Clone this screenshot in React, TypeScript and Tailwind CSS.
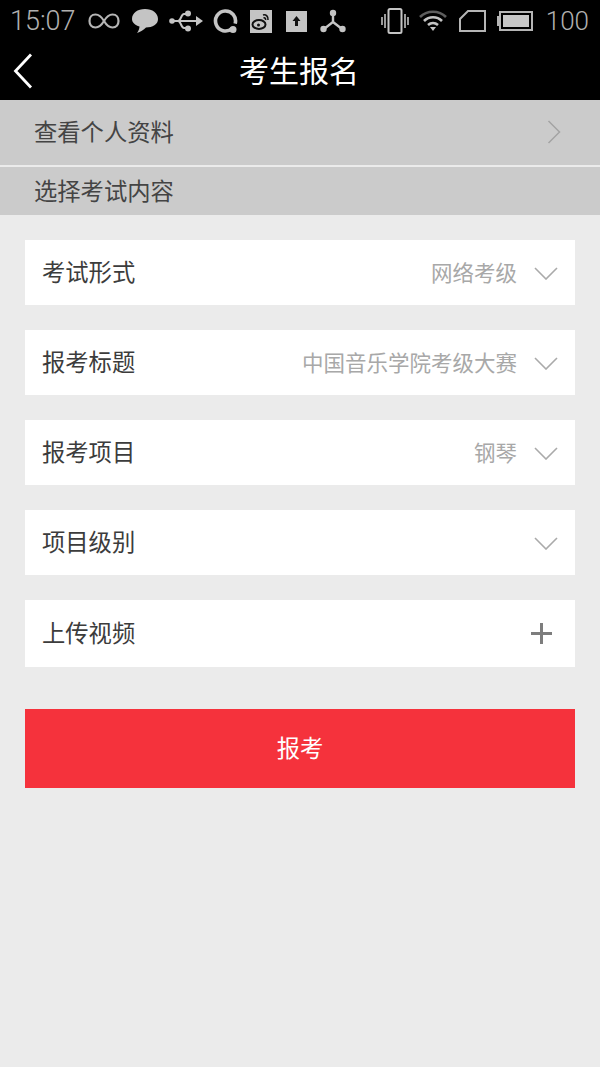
import React from 'react';

const cjk = { fontFamily: '"Noto Sans CJK SC", "Liberation Sans", sans-serif' };

const rows = [
  { label: '考试形式', value: '网络考级' },
  { label: '报考标题', value: '中国音乐学院考级大赛' },
  { label: '报考项目', value: '钢琴' },
  { label: '项目级别', value: '' },
];

const ChevronDown = () => (
  <svg width="24" height="14" viewBox="0 0 24 14" fill="none" className="ml-[17px]">
    <path d="M1 2 L12 13 L23 2" stroke="#aaaaaa" strokeWidth="1.6" />
  </svg>
);

const StatusIcons = () => (
  <div className="flex items-center">
    {/* infinity */}
    <svg width="32" height="18" viewBox="0 0 32 18" fill="none" className="ml-[12px]">
      <path d="M16 9 C13 4 10 2.500 7.500 2.500 C3.500 2.500 1.500 5.500 1.500 9 C1.500 12.500 3.500 15.500 7.500 15.500 C10 15.500 13 14 16 9 C19 4 22 2.500 24.500 2.500 C28.500 2.500 30.500 5.500 30.500 9 C30.500 12.500 28.500 15.500 24.500 15.500 C22 15.500 19 14 16 9 Z" stroke="#b5b5b5" strokeWidth="2.200" />
    </svg>
    {/* message */}
    <svg width="26" height="24" viewBox="0 0 26 24" className="ml-[12px]">
      <path d="M13 0 C20.500 0 26 4 26 10 C26 15.500 20.500 18.500 14 18.500 C11.500 21 8.500 23 5 24 C6.500 22 7.500 19.500 7.500 17.500 C3 16 0 13.500 0 10 C0 4 5.500 0 13 0 Z" fill="#c4c4c4" />
    </svg>
    {/* usb */}
    <svg width="34" height="22" viewBox="0 0 34 22" fill="none" className="ml-[11px]">
      <path d="M3 11 H28 M9 11 C12 11 12 4 15 4 H18 M9 11 C12 11 12 18 15 18 H18" stroke="#c4c4c4" strokeWidth="2" />
      <circle cx="3" cy="11" r="2.800" fill="#c4c4c4" />
      <circle cx="19" cy="3.500" r="3" fill="#c4c4c4" />
      <circle cx="19" cy="18.500" r="3" fill="#c4c4c4" />
      <path d="M27 6 L34 11 L27 16 Z" fill="#c4c4c4" />
    </svg>
    {/* q */}
    <svg width="26" height="26" viewBox="0 -1 26 26" fill="none" className="ml-[10px]">
      <path d="M18.900 19.660 A10 10 0 1 1 22.160 14.600" stroke="#c4c4c4" strokeWidth="3.600" />
      <circle cx="20" cy="20.500" r="3.500" fill="#c4c4c4" />
    </svg>
    {/* weibo */}
    <svg width="22" height="23" viewBox="0 0 22 23" fill="none" className="ml-[11px]">
      <rect width="22" height="23" fill="#c4c4c4" />
      <ellipse cx="9" cy="14.500" rx="6.500" ry="4.500" stroke="#111111" strokeWidth="2" />
      <circle cx="8.500" cy="15" r="1.500" fill="#111111" />
      <path d="M13 5 C16 4 18.500 6.500 18 10 M13.500 8 C15 7.500 16 8.500 15.500 10" stroke="#111111" strokeWidth="1.600" />
    </svg>
    {/* upload */}
    <svg width="21" height="21" viewBox="0 0 21 21" className="ml-[14px]">
      <rect width="21" height="21" fill="#c4c4c4" />
      <path d="M10.500 5 L14.500 10 H12 V15 H9 V10 H6.500 Z" fill="#111111" />
    </svg>
    {/* nodes */}
    <svg width="26" height="24" viewBox="0 0 26 24" fill="none" className="ml-[13px]">
      <path d="M13 4 V13 L4 20 M13 13 L22 20" stroke="#c4c4c4" strokeWidth="2.400" />
      <circle cx="13" cy="4" r="3.200" fill="#c4c4c4" />
      <circle cx="3.500" cy="20" r="3.200" fill="#c4c4c4" />
      <circle cx="22.500" cy="20" r="3.200" fill="#c4c4c4" />
    </svg>
  </div>
);

const StatusRight = () => (
  <div className="flex items-center">
    {/* vibrate */}
    <svg width="28" height="26" viewBox="0 0 28 26" fill="none">
      <rect x="7.500" y="1" width="13" height="24" rx="1.500" stroke="#c4c4c4" strokeWidth="2" />
      <path d="M4 6 V20 M1 9 V17 M24 6 V20 M27 9 V17" stroke="#9a9a9a" strokeWidth="2" />
    </svg>
    {/* wifi */}
    <svg width="28" height="22" viewBox="0 0 28 22" fill="none" className="ml-[10px]">
      <path d="M1 7 C8 0 20 0 27 7" stroke="#5e5e5e" strokeWidth="2.600" />
      <path d="M5 11 C10 6 18 6 23 11" stroke="#c4c4c4" strokeWidth="2.600" />
      <path d="M9 15 C12 12.500 16 12.500 19 15" stroke="#c4c4c4" strokeWidth="2.600" />
      <path d="M11 17 H17 L14 21 Z" fill="#c4c4c4" />
    </svg>
    {/* sim */}
    <svg width="27" height="22" viewBox="0 0 27 22" fill="none" className="ml-[12px]">
      <path d="M9 1 H26 V21 H1 V9 Z" stroke="#b5b5b5" strokeWidth="2" />
    </svg>
    {/* battery */}
    <svg width="36" height="20" viewBox="0 0 36 20" fill="none" className="ml-[11px]">
      <rect y="5" width="3" height="10" fill="#b5b5b5" />
      <rect x="3" y="1" width="32" height="18" stroke="#b5b5b5" strokeWidth="2" />
      <rect x="6" y="4" width="26" height="12" fill="#c8c8c8" />
    </svg>
    <span className="ml-[13px] text-[26px] leading-none font-light text-[#b0b0b0]" style={{ fontFamily: 'Roboto, sans-serif' }}>100</span>
  </div>
);

export default function App() {
  return (
    <div className="w-[600px] h-[1067px] flex flex-col bg-[#ebebeb]" style={cjk}>
      <header className="h-[100px] bg-black flex flex-col shrink-0">
        <div className="h-[42px] pl-[10px] pr-[11px] flex items-center justify-between">
          <div className="flex items-center">
            <span className="text-[27px] leading-none font-light text-[#b0b0b0]" style={{ fontFamily: 'Roboto, sans-serif' }}>15:07</span>
            <StatusIcons />
          </div>
          <StatusRight />
        </div>
        <div className="relative flex-1 flex items-center justify-center pb-[4px] pr-[2px]">
          <svg width="20" height="36" viewBox="0 0 20 36" fill="none" className="absolute left-[13px] top-[11px]">
            <path d="M18 1.500 L2.500 18 L18 34.500" stroke="#ffffff" strokeWidth="2.800" />
          </svg>
          <span className="text-[30px] leading-none text-white">考生报名</span>
        </div>
      </header>

      <div className="h-[65px] bg-[#cbcbcb] pl-[34px] pr-[39px] pb-[2px] flex items-center justify-between text-[23.300px] text-[#444444]">
        <span>查看个人资料</span>
        <svg width="14" height="24" viewBox="0 0 14 24" fill="none">
          <path d="M1.500 1 L12.500 12 L1.500 23" stroke="#a3a3a3" strokeWidth="1.500" />
        </svg>
      </div>
      <div className="h-[2px] bg-[#ebebeb]" />
      <div className="h-[48px] bg-[#cbcbcb] pl-[34px] pb-[2px] flex items-center text-[23.300px] text-[#444444]">选择考试内容</div>

      <main className="flex flex-col gap-[25px] px-[25px] pt-[25px]">
        {rows.map((row) => (
          <div key={row.label} className="h-[65px] bg-white pl-[17px] pr-[17px] flex items-center justify-between">
            <span className="pb-[2px] text-[23.300px] text-[#3c3c3c]">{row.label}</span>
            <div className="flex items-center">
              <span className="pb-[1px] text-[21.500px] text-[#a8a8a8]">{row.value}</span>
              <ChevronDown />
            </div>
          </div>
        ))}
        <div className="h-[67px] bg-white pl-[17px] pr-[23px] flex items-center justify-between">
          <span className="pb-[2px] text-[23.300px] text-[#3c3c3c]">上传视频</span>
          <svg width="21" height="21" viewBox="0 0 21 21">
            <path d="M9 0 H12 V9 H21 V12 H12 V21 H9 V12 H0 V9 H9 Z" fill="#7d7d7d" />
          </svg>
        </div>
      </main>

      <div className="px-[25px] pt-[42px]">
        <button className="w-full h-[79px] pb-[2px] bg-[#f5323c] text-white text-[23.300px]">报考</button>
      </div>
    </div>
  );
}
